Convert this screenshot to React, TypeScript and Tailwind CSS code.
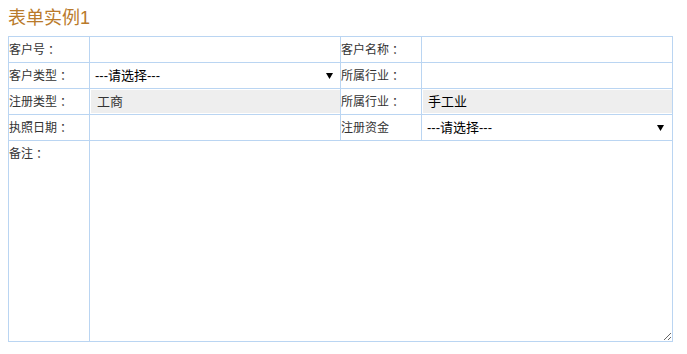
import React from "react";

const Label = ({ text, colon = true }: { text: string; colon?: boolean }) => (
  <div className="h-[25px] flex items-center text-[12px] text-[#333] leading-none whitespace-nowrap">
    <span>{text}</span>
    {colon && (
      <span style={{ fontFamily: '"Noto Sans CJK TC", sans-serif' }}>：</span>
    )}
  </div>
);

const Arrow = () => (
  <svg width="7" height="6" viewBox="0 0 7 6" className="block">
    <polygon points="0,0 7,0 3.5,6" fill="#000" />
  </svg>
);

const SelectBox = ({ pr }: { pr: string }) => (
  <div className={`h-[25px] flex items-center justify-between pl-[5px] ${pr} text-[13px] text-black`}>
    <span>---请选择---</span>
    <Arrow />
  </div>
);

export default function App() {
  const cell = "border-r border-b border-[#bad5f2]";
  return (
    <div
      className="bg-white w-[687px] h-[354px] pl-[8px]"
      style={{ fontFamily: '"Liberation Sans", "Noto Sans CJK SC", sans-serif' }}
    >
      <div className="h-[36px] flex items-center text-[18px] text-[#b97a2b] leading-none">
        表单实例1
      </div>
      <div className="grid grid-cols-[81px_251px_81px_251px] w-[665px] border-l border-t border-[#bad5f2]">
        {/* row 1 */}
        <div className={cell}>
          <Label text="客户号" />
        </div>
        <div className={cell}>
          <div className="h-[25px]" />
        </div>
        <div className={cell}>
          <Label text="客户名称" />
        </div>
        <div className={cell}>
          <div className="h-[25px]" />
        </div>

        {/* row 2 */}
        <div className={cell}>
          <Label text="客户类型" />
        </div>
        <div className={cell}>
          <SelectBox pr="pr-[7px]" />
        </div>
        <div className={cell}>
          <Label text="所属行业" />
        </div>
        <div className={cell}>
          <div className="h-[25px]" />
        </div>

        {/* row 3 */}
        <div className={cell}>
          <Label text="注册类型" />
        </div>
        <div className={`${cell} pt-[1px] pb-[1px] pl-[1px]`}>
          <div className="h-[23px] bg-[#eeeeee] flex items-center pl-[6px] text-[13px] text-[#333]">
            工商
          </div>
        </div>
        <div className={cell}>
          <Label text="所属行业" />
        </div>
        <div className={`${cell} pt-[1px] pb-[1px] pl-[1px]`}>
          <div className="h-[23px] bg-[#eeeeee] flex items-center pl-[5px] text-[13px] text-black">
            手工业
          </div>
        </div>

        {/* row 4 */}
        <div className={cell}>
          <Label text="执照日期" />
        </div>
        <div className={cell}>
          <div className="h-[25px]" />
        </div>
        <div className={cell}>
          <Label text="注册资金" colon={false} />
        </div>
        <div className={cell}>
          <SelectBox pr="pr-[8px]" />
        </div>

        {/* row 5 */}
        <div className={`${cell} h-[201px]`}>
          <Label text="备注" />
        </div>
        <div className={`${cell} col-span-3 h-[201px]`}>
          <textarea className="block w-full h-[200px] border-0 outline-none bg-white text-[13px] p-1" />
        </div>
      </div>
    </div>
  );
}
